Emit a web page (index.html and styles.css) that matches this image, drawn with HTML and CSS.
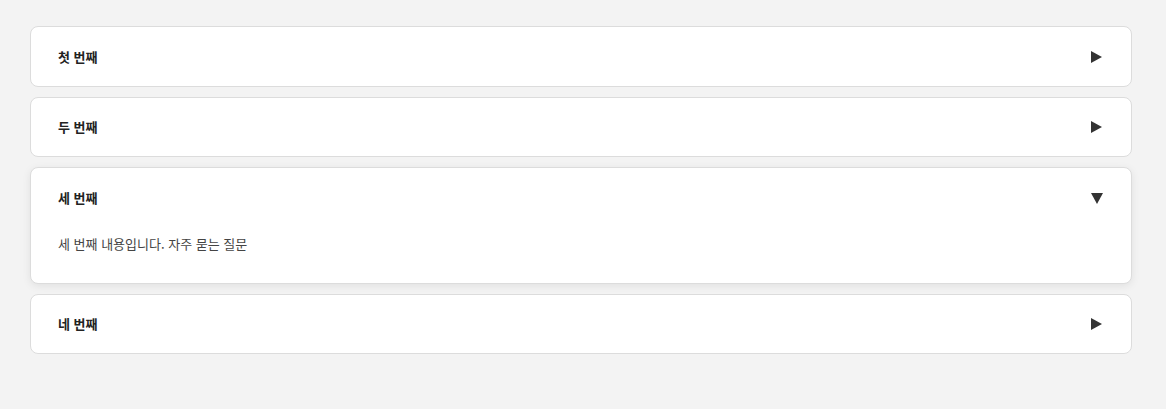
FILE: index.html
```html
<!DOCTYPE html>
<html lang="ko">
<head>
<meta charset="utf-8">
<link rel="stylesheet" href="styles.css">
</head>
<body>
<div class="faq">
  <div class="item">
    <div class="head"><span class="title">첫 번째</span><span class="arrow right"></span></div>
  </div>
  <div class="item">
    <div class="head"><span class="title">두 번째</span><span class="arrow right"></span></div>
  </div>
  <div class="item open">
    <div class="head"><span class="title">세 번째</span><span class="arrow down"></span></div>
    <div class="body">세 번째 내용입니다. 자주 묻는 질문</div>
  </div>
  <div class="item">
    <div class="head"><span class="title">네 번째</span><span class="arrow right"></span></div>
  </div>
</div>
</body>
</html>
```

FILE: styles.css
```css
html, body {
  margin: 0;
  padding: 0;
  background: #f3f3f3;
}
body {
  font-family: "Noto Sans CJK KR", "Noto Sans", sans-serif;
  color: #222;
}
.faq {
  display: flex;
  flex-direction: column;
  gap: 10px;
  padding: 26px 34px 0 30px;
}
.item {
  background: #fff;
  border: 1px solid #dcdcdc;
  border-radius: 8px;
}
.item.open {
  box-shadow: 0 2px 8px rgba(0, 0, 0, 0.08);
}
.head {
  height: 58.5px;
  display: flex;
  align-items: center;
  justify-content: space-between;
  padding: 0 29px 0 27px;
}
.title {
  font-size: 13px;
  font-weight: 700;
  color: #222;
}
.arrow {
  width: 0;
  height: 0;
}
.arrow.right {
  border-top: 6px solid transparent;
  border-bottom: 6px solid transparent;
  border-left: 11px solid #333;
  margin-top: 1px;
}
.arrow.down {
  border-left: 6px solid transparent;
  border-right: 6px solid transparent;
  border-top: 11px solid #333;
  margin-top: 2px;
  margin-right: -1px;
}
.body {
  padding: 7px 27px 29px;
  font-size: 13px;
  line-height: 20px;
  color: #444;
}
```
